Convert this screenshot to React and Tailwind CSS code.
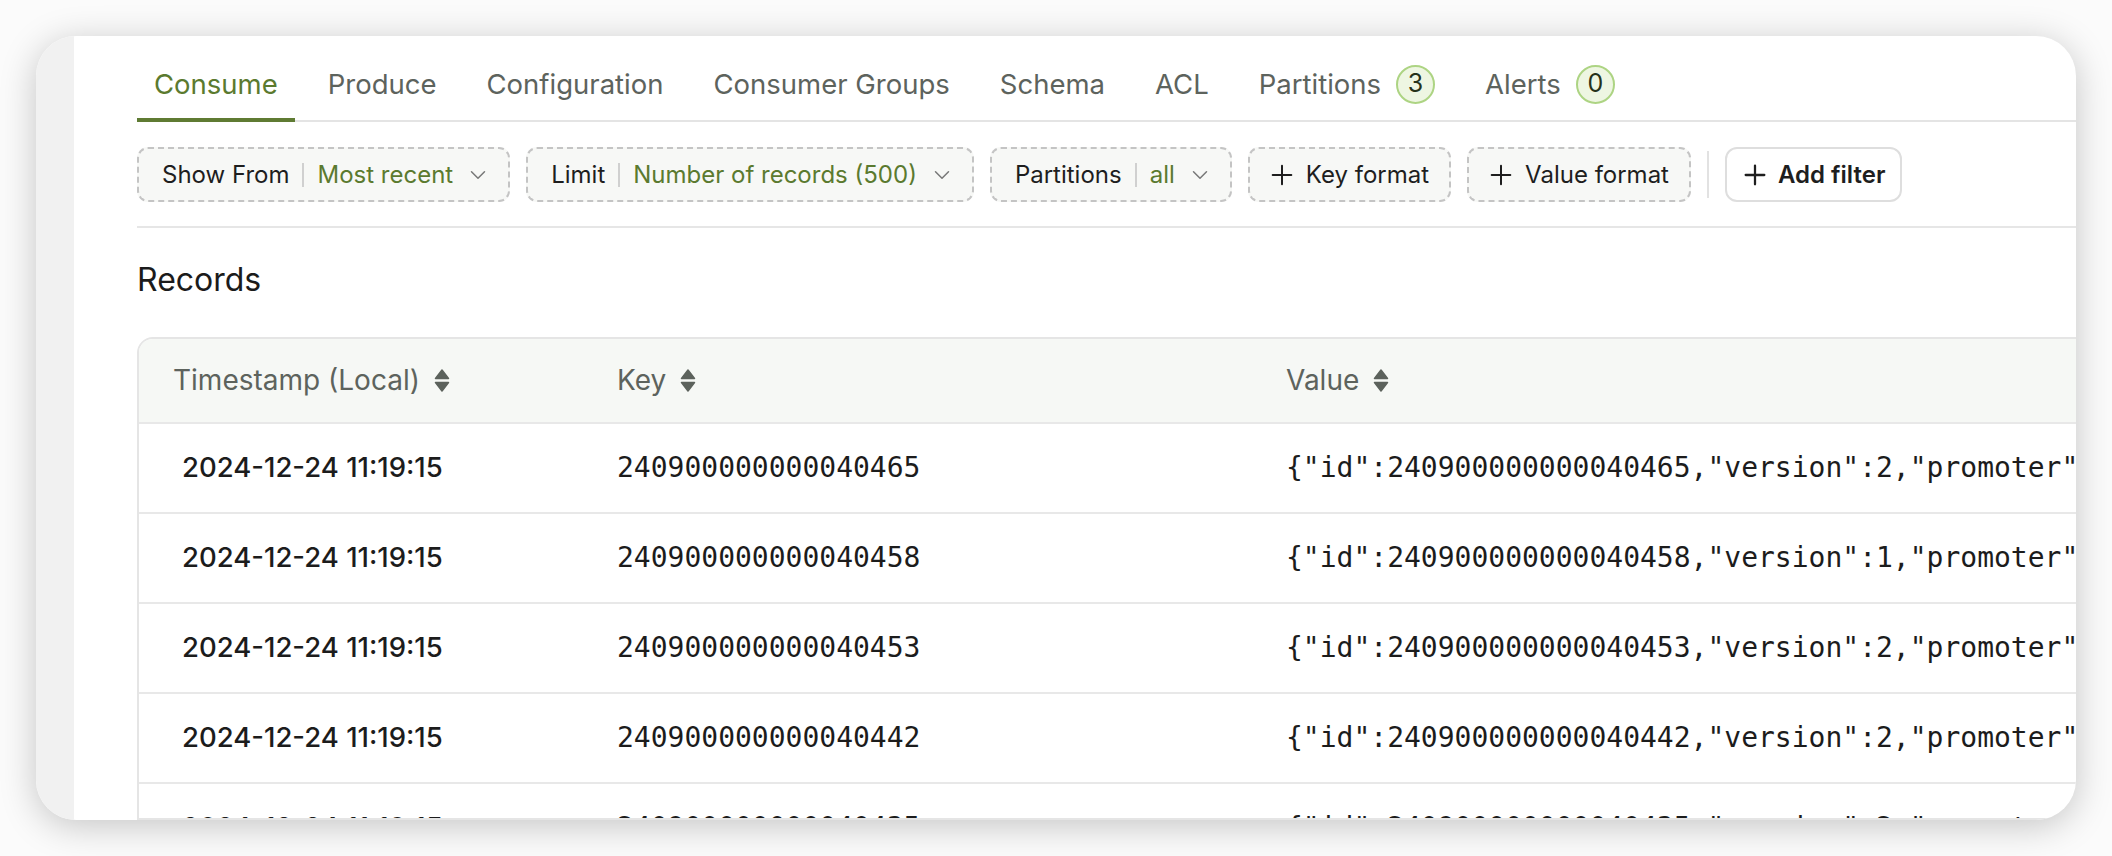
import React from 'react';
import { ChevronDown, Plus } from 'lucide-react';

const tabs = [
  { label: 'Consume', active: true },
  { label: 'Produce' },
  { label: 'Configuration' },
  { label: 'Consumer Groups' },
  { label: 'Schema' },
  { label: 'ACL' },
  { label: 'Partitions', count: 3 },
  { label: 'Alerts', count: 0 },
];

const records = [
  ['2024-12-24 11:19:15', '240900000000040465', 2],
  ['2024-12-24 11:19:15', '240900000000040458', 1],
  ['2024-12-24 11:19:15', '240900000000040453', 2],
  ['2024-12-24 11:19:15', '240900000000040442', 2],
  ['2024-12-24 11:19:15', '240900000000040435', 2],
];

const mono = { fontFamily: '"DejaVu Sans Mono", "Liberation Mono", monospace' };

function SortIcon() {
  return (
    <svg width="16" height="25" viewBox="0 0 16 25" className="shrink-0">
      <path d="M8 2 L14.5 10.5 H1.5 Z" fill="#5c625c" stroke="#5c625c" strokeWidth="1.5" strokeLinejoin="round" />
      <path d="M8 23 L14.5 14.5 H1.5 Z" fill="#5c625c" stroke="#5c625c" strokeWidth="1.5" strokeLinejoin="round" />
    </svg>
  );
}

function SelectFilter({ label, value }) {
  return (
    <button className="h-[55px] flex items-center pl-[23px] pr-[17px] rounded-[11px] border-2 border-dashed border-[#c4c4c4] bg-[#f7f8f6] text-[24px] whitespace-nowrap">
      <span className="text-[#1e1e1e]">{label}</span>
      <span className="w-[2px] h-[24px] bg-[#d0d0d0] mx-[13px]" />
      <span className="text-[#5b7a2f]">{value}</span>
      <ChevronDown className="w-[26px] h-[26px] ml-[12px] text-[#7a7a7a]" strokeWidth={1.4} />
    </button>
  );
}

function FormatFilter({ label }) {
  return (
    <button className="h-[55px] flex items-center pl-[16px] pr-[20px] rounded-[11px] border-2 border-dashed border-[#c4c4c4] bg-[#f7f8f6] text-[24px] text-[#1e1e1e] whitespace-nowrap">
      <Plus className="w-[32px] h-[32px] mr-[8px] text-[#1e1e1e]" strokeWidth={1.5} />
      {label}
    </button>
  );
}

export default function App() {
  return (
    <div className="w-[2112px] h-[856px] bg-[#fbfbfb] pt-[36px] pl-[36px]" style={{ fontFamily: 'Inter, "Liberation Sans", sans-serif' }}>
      <div className="w-[2040px] h-[784px] rounded-[40px] bg-white overflow-hidden flex shadow-[0_6px_36px_rgba(0,0,0,0.22)]">
        <div className="w-[38px] shrink-0 bg-[#f1f1f1]" />

        <div className="flex-1 min-w-0 pl-[63px] pt-[30px] flex flex-col">
          {/* tabs */}
          <div className="flex gap-[16px] border-b-2 border-[#e4e4e4]">
            {tabs.map((t) => (
              <div key={t.label}
                className={`-mb-[2px] px-[17px] pb-[16px] border-b-4 flex items-center h-[56px] ${t.active ? 'border-[#5f7b33] text-[#5b7a2f]' : 'border-transparent text-[#5d635d]'}`}>
                <span className="text-[27.5px] leading-[36px]">{t.label}</span>
                {t.count !== undefined && (
                  <span className="ml-[15px] w-[39px] h-[39px] rounded-full border-2 border-[#add483] bg-[#eef6e2] text-[#26321a] text-[25px] flex items-center justify-center">
                    {t.count}
                  </span>
                )}
              </div>
            ))}
          </div>

          {/* filters */}
          <div className="flex items-center gap-[16px] mt-[25px]">
            <SelectFilter label="Show From" value="Most recent" />
            <SelectFilter label="Limit" value="Number of records (500)" />
            <SelectFilter label="Partitions" value="all" />
            <FormatFilter label="Key format" />
            <FormatFilter label="Value format" />
            <span className="w-[2px] h-[47px] bg-[#e2e2e2]" />
            <button className="h-[55px] flex items-center pl-[12px] pr-[15px] rounded-[12px] border-2 border-[#dedede] bg-white text-[24px] font-semibold text-[#1e1e1e] whitespace-nowrap">
              <Plus className="w-[32px] h-[32px] mr-[7px]" strokeWidth={1.7} />
              Add filter
            </button>
          </div>

          <div className="h-[2px] bg-[#e6e6e6] mt-[24px]" />

          <h2 className="mt-[34px] text-[32px] leading-[36px] text-[#1b1b1b]">Records</h2>

          {/* table */}
          <div className="mt-[39px] w-[2200px] border-2 border-[#e5e5e5] rounded-tl-[16px] overflow-hidden">
            <div className="grid grid-cols-[480px_669px_1fr] h-[83px] items-center bg-[#f6f8f5] text-[28px] text-[#5d635d]">
              <div className="pl-[34px] flex items-center gap-[14px]">Timestamp (Local) <SortIcon /></div>
              <div className="-ml-[2px] flex items-center gap-[14px]">Key <SortIcon /></div>
              <div className="-ml-[2px] flex items-center gap-[14px]">Value <SortIcon /></div>
            </div>
            {records.map(([ts, key, v], i) => (
              <div key={i} className="grid grid-cols-[480px_669px_1fr] h-[90px] items-center border-t-2 border-[#e8e8e8] whitespace-nowrap text-[#1c1c1c]">
                <div className="pl-[43px] text-[27.5px] font-medium">{ts}</div>
                <div className="-ml-[2px] text-[28px]" style={mono}>{key}</div>
                <div className="-ml-[2px] text-[28px]" style={mono}>
                  {`{"id":${key},"version":${v},"promoter":{"id":1024,"name":"partner"}}`}
                </div>
              </div>
            ))}
          </div>
        </div>
      </div>
    </div>
  );
}
